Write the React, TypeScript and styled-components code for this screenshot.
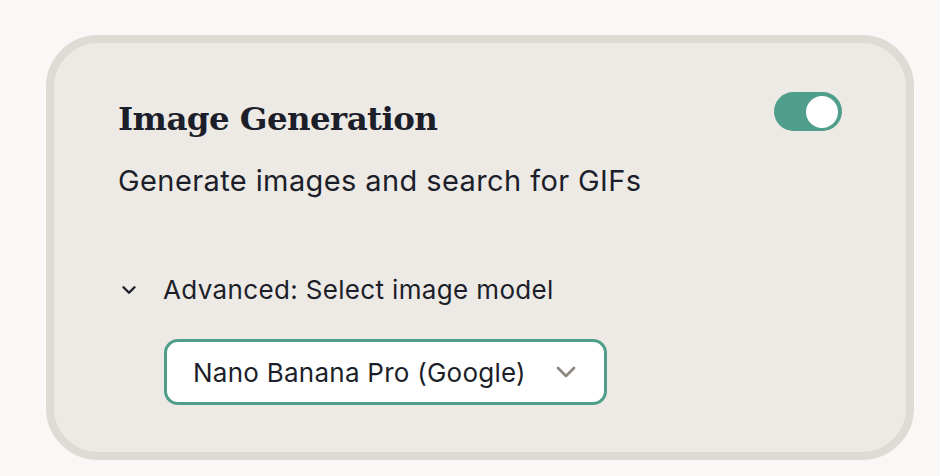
import * as React from "react";
import styled, { createGlobalStyle } from "styled-components";

const COLORS = {
  page: "#f9f8f6",
  card: "#edeae6",
  cardBorder: "#dedbd4",
  ink: "#1c1f2a",
  teal: "#4f9e8b",
  muted: "#8b877f",
};

const GlobalStyle = createGlobalStyle`
  html, body {
    margin: 0;
    padding: 0;
    background: ${COLORS.page};
  }
  body {
    font-family: "Inter", "Open Sans", sans-serif;
    color: ${COLORS.ink};
  }
`;

const Page = styled.div`
  width: 940px;
  height: 476px;
  padding: 35px 26px 0 46px;
  box-sizing: border-box;
`;

const Card = styled.section`
  box-sizing: border-box;
  width: 868px;
  height: 425px;
  border: 8px solid ${COLORS.cardBorder};
  border-radius: 52px;
  background: ${COLORS.card};
  padding: 52px 64px 0 64px;
`;

const Header = styled.div`
  display: flex;
  justify-content: space-between;
  align-items: flex-start;
`;

const Title = styled.h2`
  margin: 0;
  font-family: "DejaVu Serif", "Liberation Serif", serif;
  font-weight: 700;
  font-size: 32.5px;
  letter-spacing: -0.6px;
  line-height: 48px;
`;

const Description = styled.p`
  margin: 20px 0 0 0;
  font-size: 29px;
  font-weight: 400;
  letter-spacing: 0.4px;
  line-height: 36px;
`;

const Switch = styled.button<{ on?: boolean }>`
  width: 68px;
  height: 39px;
  margin-top: -3px;
  border: none;
  border-radius: 20px;
  padding: 0 4px;
  background: ${(p) => (p.on ? COLORS.teal : COLORS.cardBorder)};
  display: flex;
  align-items: center;
  justify-content: ${(p) => (p.on ? "flex-end" : "flex-start")};
  cursor: pointer;
`;

const Knob = styled.span`
  width: 32px;
  height: 32px;
  border-radius: 50%;
  background: #fff;
`;

const Advanced = styled.div`
  margin-top: 75px;
  display: flex;
  align-items: center;
  gap: 23px;
  font-size: 26px;
  letter-spacing: 0.35px;
  line-height: 32px;
`;

const SelectBox = styled.div`
  margin: 33px 0 0 46px;
  box-sizing: border-box;
  width: 443px;
  height: 66px;
  border: 3px solid ${COLORS.teal};
  border-radius: 14px;
  background: #fff;
  display: flex;
  align-items: center;
  justify-content: space-between;
  padding: 0 22px 0 26px;
  font-size: 26px;
  letter-spacing: 0.25px;
`;

const Chevron = ({ size, color, weight }: { size: number; color: string; weight: number }) => (
  <svg width={size} height={size} viewBox="0 0 24 24" fill="none" stroke={color} strokeWidth={weight} strokeLinecap="round" strokeLinejoin="round">
    <path d="M6 9l6 6 6-6" />
  </svg>
);

export default function App() {
  return (
    <>
      <GlobalStyle />
      <Page>
        <Card>
          <Header>
            <Title>Image Generation</Title>
            <Switch on aria-label="Toggle image generation">
              <Knob />
            </Switch>
          </Header>
          <Description>Generate images and search for GIFs</Description>
          <Advanced>
            <Chevron size={22} color={COLORS.ink} weight={2.6} />
            <span>Advanced: Select image model</span>
          </Advanced>
          <SelectBox>
            <span>Nano Banana Pro (Google)</span>
            <Chevron size={32} color={COLORS.muted} weight={2} />
          </SelectBox>
        </Card>
      </Page>
    </>
  );
}
